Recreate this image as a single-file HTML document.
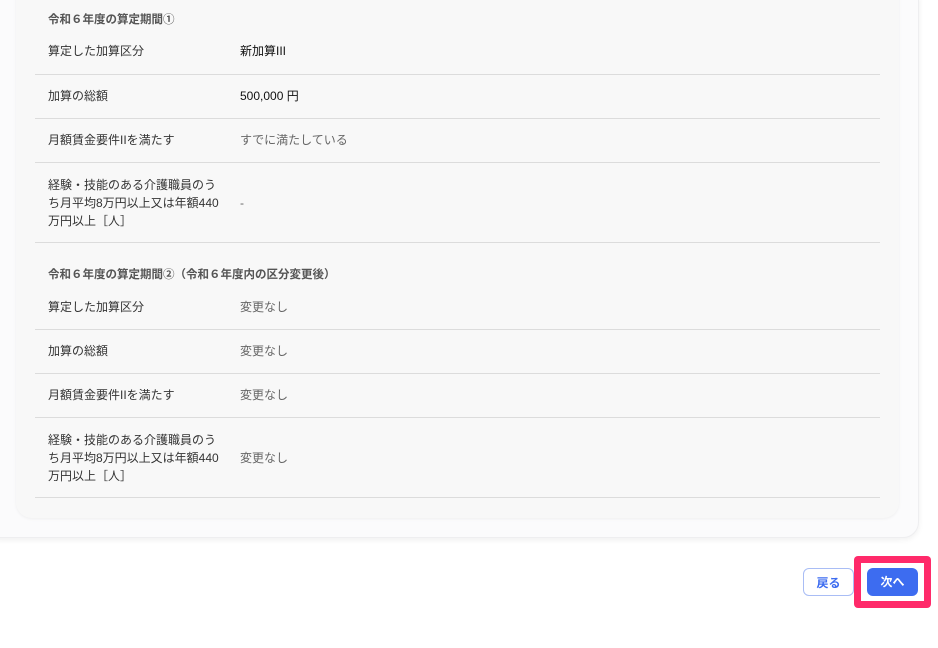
<!DOCTYPE html>
<html><head><meta charset="utf-8"><style>
body{margin:0;width:938px;height:648px;background:#fff;font-family:"Liberation Sans","Noto Sans CJK JP",sans-serif;position:relative;overflow:hidden;color:#333}
.outer{position:absolute;left:-20px;top:-20px;width:937px;height:556px;background:#fbfbfc;border-radius:16px;box-shadow:0 2px 6px rgba(0,0,0,0.06);border:1px solid #eeeef0}
.inner{position:absolute;left:16px;top:-20px;width:883px;height:538px;background:#f8f8f8;border-radius:16px;box-shadow:0 1px 3px rgba(0,0,0,0.05)}
.t{position:absolute;font-size:12px;line-height:18px;white-space:nowrap}
.h{font-weight:bold;color:#555;font-size:11.5px}
.v{color:#111}
.g{color:#666}
.line{position:absolute;left:35px;width:845px;height:1px;background:#dcdcdc}
.btn{position:absolute;top:568px;width:51px;height:28px;border-radius:6px;font-size:12px;font-weight:bold;text-align:center;line-height:28px;box-sizing:border-box}
</style></head><body>
<div class="outer"></div>
<div class="inner"></div>
<div class="t h" style="left:48px;top:11px">令和６年度の算定期間①</div>
<div class="t" style="left:48px;top:42px">算定した加算区分</div>
<div class="t v" style="left:240px;top:42px">新加算III</div>
<div class="line" style="top:74px"></div>
<div class="t" style="left:48px;top:87px">加算の総額</div>
<div class="t v" style="left:240px;top:87px">500,000 円</div>
<div class="line" style="top:118px"></div>
<div class="t" style="left:48px;top:131px">月額賃金要件IIを満たす</div>
<div class="t g" style="left:240px;top:131px">すでに満たしている</div>
<div class="line" style="top:162px"></div>
<div class="t" style="left:48px;top:176px">経験・技能のある介護職員のう<br>ち月平均8万円以上又は年額440<br>万円以上［人］</div>
<div class="t g" style="left:240px;top:194px">-</div>
<div class="line" style="top:242px"></div>
<div class="t h" style="left:48px;top:266px">令和６年度の算定期間②（令和６年度内の区分変更後）</div>
<div class="t" style="left:48px;top:298px">算定した加算区分</div>
<div class="t g" style="left:240px;top:298px">変更なし</div>
<div class="line" style="top:329px"></div>
<div class="t" style="left:48px;top:342px">加算の総額</div>
<div class="t g" style="left:240px;top:342px">変更なし</div>
<div class="line" style="top:373px"></div>
<div class="t" style="left:48px;top:386px">月額賃金要件IIを満たす</div>
<div class="t g" style="left:240px;top:386px">変更なし</div>
<div class="line" style="top:417px"></div>
<div class="t" style="left:48px;top:431px">経験・技能のある介護職員のう<br>ち月平均8万円以上又は年額440<br>万円以上［人］</div>
<div class="t g" style="left:240px;top:449px">変更なし</div>
<div class="line" style="top:497px"></div>
<div class="btn" style="left:803px;border:1px solid #a9bdf5;color:#3d6cf0;background:#fff">戻る</div>
<div style="position:absolute;left:854px;top:556px;width:77px;height:52px;background:#ff2a6a;border-radius:4px"></div>
<div style="position:absolute;left:861px;top:563px;width:63px;height:38px;background:#fff"></div>
<div class="btn" style="left:867px;background:#3d6cf0;color:#fff">次へ</div>
</body></html>
